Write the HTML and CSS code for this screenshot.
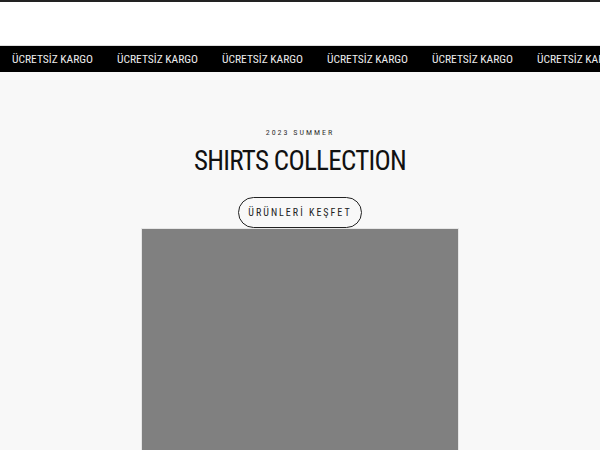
FILE: index.html
```html
<!DOCTYPE html>
<html lang="tr">
<head>
    <meta charset="UTF-8">
    <meta name="viewport" content="width=device-width, initial-scale=1.0">
    <title>Shirts Collection</title>
    <link rel="stylesheet" href="styles.css">
</head>
<body>
    <header class="header"></header>

    <div class="marquee">
        <div class="marquee-track">
            <span>ÜCRETSİZ KARGO</span>
            <span>ÜCRETSİZ KARGO</span>
            <span>ÜCRETSİZ KARGO</span>
            <span>ÜCRETSİZ KARGO</span>
            <span>ÜCRETSİZ KARGO</span>
            <span>ÜCRETSİZ KARGO</span>
            <span>ÜCRETSİZ KARGO</span>
        </div>
    </div>

    <section class="hero">
        <div class="hero-eyebrow">2023 SUMMER</div>
        <h1 class="hero-title">SHIRTS COLLECTION</h1>
        <a class="hero-button" href="#">ÜRÜNLERİ KEŞFET</a>
        <div class="hero-image"></div>
    </section>
</body>
</html>
```

FILE: styles.css
```css
* {
    margin: 0;
    padding: 0;
    box-sizing: border-box;
}

body {
    background: #f8f8f8;
    color: #111;
    font-family: Roboto, "Liberation Sans", sans-serif;
    font-stretch: condensed;
    height: 100vh;
    overflow: hidden;
    border-top: 2px solid #222;
}

.header {
    height: 44px;
    background: #fff;
    border-bottom: 1px solid #ddd;
}

.marquee {
    background: #000;
    height: 26px;
    overflow: hidden;
    white-space: nowrap;
}

.marquee-track {
    display: flex;
    padding-left: 12px;
    height: 100%;
    align-items: center;
}

.marquee-track span {
    color: #eee;
    font-size: 11.5px;
    font-weight: 400;
    width: 105px;
    flex: 0 0 105px;
}

.hero {
    display: flex;
    flex-direction: column;
    align-items: center;
    padding-top: 56px;
}

.hero-eyebrow {
    font-size: 8px;
    letter-spacing: 2px;
    color: #333;
    line-height: 10px;
}

.hero-title {
    font-size: 27px;
    font-weight: 400;
    letter-spacing: -0.7px;
    color: #111;
    margin-top: 5px;
    line-height: 36px;
}

.hero-button {
    margin-top: 18px;
    width: 124px;
    height: 31px;
    border: 1px solid #222;
    border-radius: 16px;
    display: flex;
    align-items: center;
    justify-content: center;
    font-size: 10px;
    letter-spacing: 2px;
    color: #222;
    text-decoration: none;
}

.hero-image {
    width: 318px;
    height: 400px;
    background: #808080;
    border: 1px solid #e6e6e6;
}
```
